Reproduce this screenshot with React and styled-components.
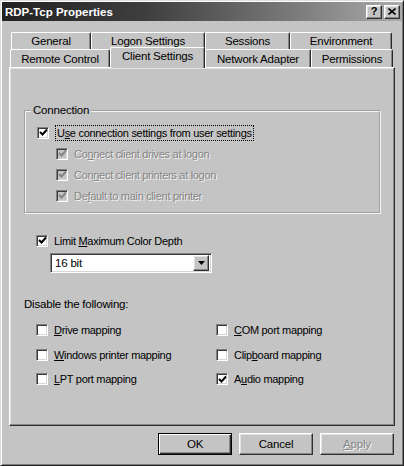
import React from 'react';
import styled, { createGlobalStyle, css } from 'styled-components';

const GlobalStyle = createGlobalStyle`
    body {
        margin: 0;
        background: #c6c6c6;
        font-family: "Liberation Sans", Arial, sans-serif;
        font-size: 11px;
        letter-spacing: -0.2px;
        color: #000;
    }
`;

// classic 3d edges
const raised = css`
    border: 1px solid;
    border-color: #ffffff #303030 #303030 #ffffff;
    box-shadow: inset -1px -1px 0 #858585, inset 1px 1px 0 #e2e2e2;
`;

const sunken = css`
    border: 1px solid;
    border-color: #808080 #ffffff #ffffff #808080;
    box-shadow: inset 1px 1px 0 #3a3a3a, inset -1px -1px 0 #d6d6d6;
`;

const Window = styled.div`
    width: 404px;
    height: 466px;
    box-sizing: border-box;
    padding: 1px;
    background: #c4c4c4;
    border: 1px solid;
    border-color: #dedede #202020 #202020 #dedede;
    box-shadow: inset 1px 1px 0 #ffffff, inset -1px -1px 0 #7c7c7c;
    display: flex;
    flex-direction: column;
`;

const TitleBar = styled.div`
    height: 19px;
    flex: none;
    display: flex;
    align-items: center;
    justify-content: space-between;
    padding: 0 2px 0 3px;
    background: linear-gradient(to right, #222222 0%, #3d3d3d 35%, #7e7e7e 75%, #ababab 100%);
`;

const Title = styled.div`
    color: #ffffff;
    font-weight: bold;
    font-size: 11.5px;
    letter-spacing: 0;
`;

const TitleButtons = styled.div`
    display: flex;
    gap: 2px;
`;

const TitleButton = styled.div`
    ${raised};
    width: 14px;
    height: 12px;
    background: #c4c4c4;
    display: flex;
    align-items: center;
    justify-content: center;
    font-weight: bold;
    font-size: 11px;
    line-height: 1;
`;

const Body = styled.div`
    flex: 1;
    display: flex;
    flex-direction: column;
    padding: 0 7px;
`;

const Tabs = styled.div`
    margin-top: 11px;
    display: flex;
    flex-direction: column;
`;

const TabRow = styled.div`
    display: flex;
    align-items: flex-end;
    height: ${p => p.$h}px;
    margin-left: ${p => p.$indent}px;
`;

const Tab = styled.div`
    box-sizing: border-box;
    width: ${p => p.$w}px;
    height: ${p => (p.$active ? p.$h + 3 : p.$h)}px;
    margin-bottom: ${p => (p.$active ? -1 : 0)}px;
    position: relative;
    z-index: ${p => (p.$active ? 2 : 1)};
    background: #c4c4c4;
    border-top: 1px solid #ffffff;
    border-left: 1px solid #ffffff;
    border-right: 1px solid #2a2a2a;
    box-shadow: inset -1px 0 0 #858585;
    border-radius: 2px 2px 0 0;
    display: flex;
    align-items: center;
    justify-content: center;
    padding-bottom: ${p => (p.$active ? 4 : 0)}px;
    font-size: 11.5px;
`;

const Panel = styled.div`
    flex: 1;
    display: flex;
    flex-direction: column;
    ${raised};
    padding: 0 13px 0 14px;
`;

const GroupBox = styled.fieldset`
    margin: 36px 0 0;
    padding: 5px 11px 6px;
    min-width: 0;
    border: 2px groove #f4f4f4;
`;

const Legend = styled.legend`
    margin-left: -6px;
    padding: 0 2px;
    font-size: 11.5px;
    line-height: 13px;
`;

const CheckRow = styled.div`
    display: flex;
    align-items: center;
    height: ${p => p.$h || 21}px;
    padding-left: ${p => p.$indent || 0}px;
    color: ${p => (p.$disabled ? '#858585' : '#000')};
    text-shadow: ${p => (p.$disabled ? '1px 1px 0 #f4f4f4' : 'none')};
    font-size: 11px;
    letter-spacing: -0.3px;
`;

const Box = styled.div`
    ${sunken};
    box-sizing: border-box;
    width: 12px;
    height: 12px;
    flex: none;
    margin-right: ${p => (p.$focus ? 7 : 6)}px;
    background: ${p => (p.$disabled ? '#c4c4c4' : '#ffffff')};
    display: flex;
    align-items: center;
    justify-content: center;
`;

const FocusLabel = styled.span`
    outline: 1px dotted #000;
    padding: 0 1px;
    line-height: 14px;
`;

const Key = styled.span`
    text-decoration: underline;
`;

const ColorRow = styled.div`
    margin-top: 16px;
    padding-left: 12px;
`;

const Select = styled.div`
    ${sunken};
    box-sizing: border-box;
    width: 162px;
    height: 20px;
    margin: 2px 0 0 26px;
    background: #ffffff;
    display: flex;
    align-items: center;
    justify-content: space-between;
    padding: 2px 2px 2px 4px;
    font-size: 11.5px;
`;

const DropButton = styled.div`
    ${raised};
    box-sizing: border-box;
    width: 16px;
    height: 16px;
    background: #c4c4c4;
    display: flex;
    align-items: center;
    justify-content: center;
`;

const SectionLabel = styled.div`
    margin-top: 25px;
    font-size: 11.5px;
    line-height: 13px;
`;

const OptionGrid = styled.div`
    margin-top: 7px;
    padding-left: 12px;
    display: grid;
    grid-template-columns: 180px 1fr;
    grid-auto-rows: 24.5px;
`;

const ButtonRow = styled.div`
    display: flex;
    justify-content: flex-end;
    gap: 7px;
    padding: 7px 1px 9px 0;
`;

const Button = styled.div`
    box-sizing: border-box;
    width: 74px;
    height: 22px;
    display: flex;
    align-items: center;
    justify-content: center;
    font-size: 11.5px;
    background: #c4c4c4;
    ${raised};
    ${p => p.$default && css`
        border-color: #000;
        box-shadow: inset 1px 1px 0 #ffffff, inset -1px -1px 0 #303030, inset -2px -2px 0 #858585;
    `}
    ${p => p.$disabled && css`
        color: #858585;
        text-shadow: 1px 1px 0 #f4f4f4;
    `}
`;

const Check = ({ color }) => (
    <svg width="9" height="9" viewBox="0 0 9 9">
        <path d="M1 4 L3.5 6.5 L8 1.5" fill="none" stroke={color} strokeWidth="2" />
    </svg>
);

const CheckItem = ({ checked, disabled, indent, focus, h, children }) => (
    <CheckRow $disabled={disabled} $indent={indent} $h={h}>
        <Box $disabled={disabled} $focus={focus}>
            {checked && <Check color={disabled ? '#858585' : '#000'} />}
        </Box>
        {focus ? <FocusLabel>{children}</FocusLabel> : <span>{children}</span>}
    </CheckRow>
);

const backTabs = [
    { label: 'General', w: 80 },
    { label: 'Logon Settings', w: 114 },
    { label: 'Sessions', w: 85 },
    { label: 'Environment', w: 102 },
];

const frontTabs = [
    { label: 'Remote Control', w: 100 },
    { label: 'Client Settings', w: 95, active: true },
    { label: 'Network Adapter', w: 106 },
    { label: 'Permissions', w: 82 },
];

const App = () => {
    return (
        <>
            <GlobalStyle />
            <Window>
                <TitleBar>
                    <Title>RDP-Tcp Properties</Title>
                    <TitleButtons>
                        <TitleButton>?</TitleButton>
                        <TitleButton>
                            <svg width="8" height="7" viewBox="0 0 8 7">
                                <path d="M0.5 0.5 L7.5 6.5 M7.5 0.5 L0.5 6.5" stroke="#000" strokeWidth="1.6" />
                            </svg>
                        </TitleButton>
                    </TitleButtons>
                </TitleBar>

                <Body>
                    <Tabs>
                        <TabRow $h={17} $indent={2}>
                            {backTabs.map(t => (
                                <Tab key={t.label} $w={t.w} $h={17}>{t.label}</Tab>
                            ))}
                        </TabRow>
                        <TabRow $h={18} $indent={1}>
                            {frontTabs.map(t => (
                                <Tab key={t.label} $w={t.w} $h={18} $active={t.active}>{t.label}</Tab>
                            ))}
                        </TabRow>
                    </Tabs>

                    <Panel>
                        <GroupBox>
                            <Legend>Connection</Legend>
                            <CheckItem checked focus>U<Key>s</Key>e connection settings from user settings</CheckItem>
                            <CheckItem checked disabled indent={19}>Co<Key>n</Key>nect client drives at logon</CheckItem>
                            <CheckItem checked disabled indent={19}>Con<Key>n</Key>ect client printers at logon</CheckItem>
                            <CheckItem checked disabled indent={19}>De<Key>f</Key>ault to main client printer</CheckItem>
                        </GroupBox>

                        <ColorRow>
                            <CheckItem checked>Limit <Key>M</Key>aximum Color Depth</CheckItem>
                        </ColorRow>
                        <Select>
                            <span>16 bit</span>
                            <DropButton>
                                <svg width="7" height="4" viewBox="0 0 7 4">
                                    <path d="M0 0 H7 L3.5 4 Z" fill="#000" />
                                </svg>
                            </DropButton>
                        </Select>

                        <SectionLabel>Disable the following:</SectionLabel>
                        <OptionGrid>
                            <CheckItem h={24.5}><Key>D</Key>rive mapping</CheckItem>
                            <CheckItem h={24.5}><Key>C</Key>OM port mapping</CheckItem>
                            <CheckItem h={24.5}><Key>W</Key>indows printer mapping</CheckItem>
                            <CheckItem h={24.5}>Clip<Key>b</Key>oard mapping</CheckItem>
                            <CheckItem h={24.5}><Key>L</Key>PT port mapping</CheckItem>
                            <CheckItem checked h={24.5}>A<Key>u</Key>dio mapping</CheckItem>
                        </OptionGrid>
                    </Panel>

                    <ButtonRow>
                        <Button $default>OK</Button>
                        <Button>Cancel</Button>
                        <Button $disabled><Key>A</Key>pply</Button>
                    </ButtonRow>
                </Body>
            </Window>
        </>
    );
};

export default App;
